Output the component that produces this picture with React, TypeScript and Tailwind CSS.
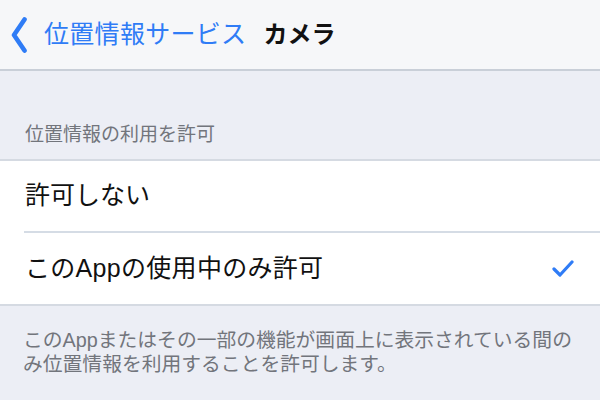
export default function App() {
  return (
    <main
      className="w-[600px] h-[400px] overflow-hidden bg-[#ECEEF5] flex flex-col"
      style={{ fontFamily: '"Liberation Sans", "Noto Sans CJK JP", sans-serif' }}
    >
      <header className="h-[71px] shrink-0 bg-[#F6F7F9] border-b-2 border-[#C9CFD8] flex items-center">
        <svg width="18" height="38" viewBox="0 0 18 38" className="ml-[9px] mt-[1px]">
          <path d="M15.5 3.5 L5 19 L15.5 34.5" fill="none" stroke="#2F7CF6" strokeWidth="4.6" strokeLinecap="round" strokeLinejoin="round" />
        </svg>
        <span className="ml-[17px] text-[25px] leading-none text-[#2F7CF6] tracking-[0.3px]">位置情報サービス</span>
        <span className="ml-[17px] text-[24px] leading-none font-bold text-[#111]">カメラ</span>
      </header>

      <div className="h-[88px] shrink-0 flex items-end px-[25px] pb-[15px]">
        <span className="text-[19px] leading-[19px] text-[#72757C]">位置情報の利用を許可</span>
      </div>

      <section className="bg-white border-y-2 border-[#D5DAE2]">
        <div className="h-[70px] flex items-center px-[25px]">
          <span className="text-[25px] text-[#111]">許可しない</span>
        </div>
        <div className="ml-[24px] h-[2px] bg-[#D5DCE5]" />
        <div className="h-[71px] flex items-center justify-between pl-[25px] pr-[26px]">
          <span className="text-[25px] text-[#111] tracking-[0.3px]">このAppの使用中のみ許可</span>
          <svg width="22" height="17" viewBox="0 0 22 17">
            <path d="M2 9 L8 15 L20 2" fill="none" stroke="#2F7CF6" strokeWidth="3.2" strokeLinecap="round" strokeLinejoin="round" />
          </svg>
        </div>
      </section>

      <p className="px-[23px] pt-[22px] text-[19.8px] leading-[24px] text-[#72757C]">
        このAppまたはその一部の機能が画面上に表示されている間の
        <br />
        み位置情報を利用することを許可します。
      </p>
    </main>
  );
}
